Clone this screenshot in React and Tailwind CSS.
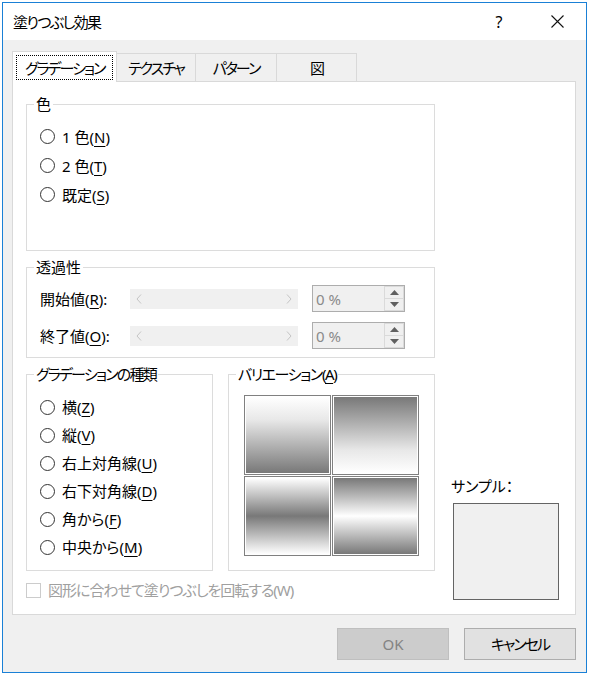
import React from 'react'

const font = "font-['Noto_Sans','Noto_Sans_CJK_JP',sans-serif] [font-feature-settings:'palt']"

function U({ children }) {
  return <span className="underline underline-offset-[3px] decoration-1">{children}</span>
}

function Radio({ children, h = 'h-[29px]' }) {
  return (
    <div className={`flex items-center ${h}`}>
      <span className="w-[15px] h-[15px] rounded-full border border-[#333] bg-white shrink-0" />
      <span className="ml-[7px] whitespace-nowrap">{children}</span>
    </div>
  )
}

function Group({ title, className, legendClass = '', children }) {
  return (
    <fieldset className={`border border-[#dcdcdc] p-0 m-0 min-w-0 ${className}`}>
      <legend className={`ml-[7px] px-[2px] leading-[20px] whitespace-nowrap ${legendClass}`}>{title}</legend>
      {children}
    </fieldset>
  )
}

function Slider() {
  return (
    <div className="w-[168px] h-[20px] bg-[#f0f0f0] flex items-center justify-between px-[6px]">
      <svg width="6" height="10" viewBox="0 0 6 10"><polyline points="5,0.5 1,5 5,9.5" fill="none" stroke="#c4c4c4" strokeWidth="1" /></svg>
      <svg width="6" height="10" viewBox="0 0 6 10"><polyline points="1,0.5 5,5 1,9.5" fill="none" stroke="#c4c4c4" strokeWidth="1" /></svg>
    </div>
  )
}

function Spinner() {
  return (
    <div className="ml-[14px] w-[93px] h-[27px] border border-[#adadad] bg-[#f0f0f0] flex">
      <div className="flex-1 flex items-center pl-[3px] text-[#8a8a8a] whitespace-pre">0 %</div>
      <div className="w-[20px] flex flex-col bg-white">
        <div className="flex-1 border border-[#dadada] bg-[#f0f0f0] flex items-center justify-center">
          <svg width="9" height="5" viewBox="0 0 9 5"><polygon points="0,5 4.5,0 9,5" fill="#606060" /></svg>
        </div>
        <div className="flex-1 border border-t-0 border-[#dadada] bg-[#f0f0f0] flex items-center justify-center">
          <svg width="9" height="5" viewBox="0 0 9 5"><polygon points="0,0 4.5,5 9,0" fill="#606060" /></svg>
        </div>
      </div>
    </div>
  )
}

function Cell({ bg }) {
  return (
    <div className="w-[87px] h-[80px] border border-[#808080] bg-white p-px">
      <div className={`w-full h-full ${bg}`} />
    </div>
  )
}

export default function App() {
  return (
    <div className={`w-[591px] h-[675px] bg-white pl-[2px] pt-[2px] text-[15px] leading-[20px] text-black ${font}`}>
      <div className="w-[585px] h-[671px] border border-[#1a80d6] flex flex-col">
        {/* title bar */}
        <div className="h-[37px] bg-white flex items-center pl-[10px] pr-[17px]">
          <span className="tracking-[-1.6px]">塗りつぶし効果</span>
          <span className="ml-auto w-[30px] text-center text-[16px]">?</span>
          <span className="ml-[31px] w-[24px] flex justify-center">
            <svg width="13" height="13" viewBox="0 0 13 13"><path d="M0.5 0.5L12.5 12.5M12.5 0.5L0.5 12.5" stroke="#111" strokeWidth="1.1" /></svg>
          </span>
        </div>

        <div className="flex-1 bg-[#f0f0f0] pt-[11px] pl-[9px] pr-[10px]">
          {/* tabs */}
          <div className="flex items-end h-[30px] whitespace-nowrap tracking-[-2px]">
            <div className="relative z-10 h-[31px] -mb-px w-[105px] bg-white border border-b-0 border-[#d9d9d9] p-[3px] pb-[2px]">
              <div className="h-full border border-dotted border-black flex items-center pl-[8px]">グラデーション</div>
            </div>
            <div className="h-[28px] w-[79px] border-t border-r border-[#d9d9d9] flex items-center justify-center">テクスチャ</div>
            <div className="h-[28px] w-[81px] border-t border-r border-[#d9d9d9] flex items-center justify-center">パターン</div>
            <div className="h-[28px] w-[80px] border-t border-r border-[#d9d9d9] flex items-center justify-center">図</div>
          </div>

          {/* panel */}
          <div className="w-[564px] h-[534px] bg-white border border-[#d9d9d9] flex pl-[13px] pt-[12px]">
            <div className="w-[409px] flex flex-col">
              <Group title="色" className="h-[157px]">
                <div className="pt-[8px] pl-[13px]">
                  <Radio>1 色(<U>N</U>)</Radio>
                  <Radio>2 色(<U>T</U>)</Radio>
                  <Radio>既定(<U>S</U>)</Radio>
                </div>
              </Group>

              <Group title="透過性" className="mt-[6px] h-[101px]">
                <div className="pt-[8px] pl-[13px] flex flex-col gap-[10px]">
                  <div className="flex items-center h-[27px]">
                    <span className="w-[90px]">開始値(<U>R</U>):</span>
                    <Slider />
                    <Spinner />
                  </div>
                  <div className="flex items-center h-[27px]">
                    <span className="w-[90px]">終了値(<U>O</U>):</span>
                    <Slider />
                    <Spinner />
                  </div>
                </div>
              </Group>

              <div className="mt-[6px] flex gap-[15px]">
                <Group title="グラデーションの種類" legendClass="tracking-[-1.8px]" className="w-[187px] h-[207px]">
                  <div className="pt-[9px] pl-[13px]">
                    <Radio h="h-[28px]">横(<U>Z</U>)</Radio>
                    <Radio h="h-[28px]">縦(<U>V</U>)</Radio>
                    <Radio h="h-[28px]">右上対角線(<U>U</U>)</Radio>
                    <Radio h="h-[28px]">右下対角線(<U>D</U>)</Radio>
                    <Radio h="h-[28px]">角から(<U>F</U>)</Radio>
                    <Radio h="h-[28px]">中央から(<U>M</U>)</Radio>
                  </div>
                </Group>
                <Group title={<>バリエーション(<U>A</U>)</>} legendClass="tracking-[-1.4px]" className="w-[207px] h-[207px]">
                  <div className="pt-[11px] pl-[15px] grid grid-cols-[87px_87px] gap-px">
                    <Cell bg="bg-[linear-gradient(to_bottom,#ffffff_0%,#e8e8e8_30%,#787878_100%)]" />
                    <Cell bg="bg-[linear-gradient(to_bottom,#787878_0%,#e8e8e8_70%,#ffffff_100%)]" />
                    <Cell bg="bg-[linear-gradient(to_bottom,#ffffff_0%,#787878_50%,#ffffff_100%)]" />
                    <Cell bg="bg-[linear-gradient(to_bottom,#787878_0%,#ffffff_50%,#787878_100%)]" />
                  </div>
                </Group>
              </div>

              <div className="mt-[9px] flex items-center h-[20px] text-[#a0a0a0]">
                <span className="w-[15px] h-[15px] border border-[#cccccc] bg-white" />
                <span className="ml-[7px] tracking-[-1px] whitespace-nowrap">図形に合わせて塗りつぶしを回転する(W)</span>
              </div>
            </div>

            <div className="flex-1 flex flex-col justify-end pb-[14px] pl-[16px]">
              <div className="whitespace-nowrap">サンプル：</div>
              <div className="mt-[7px] ml-[2px] w-[106px] h-[97px] border border-[#646464] bg-[#f0f0f0]" />
            </div>
          </div>

          {/* buttons */}
          <div className="mt-[13px] flex justify-end gap-[15px]">
            <div className="w-[112px] h-[32px] bg-[#cccccc] border border-[#bfbfbf] flex items-center justify-center text-[#838383]">OK</div>
            <div className="w-[112px] h-[32px] bg-[#e1e1e1] border border-[#adadad] flex items-center justify-center tracking-[-2px]">キャンセル</div>
          </div>
        </div>
      </div>
    </div>
  )
}
